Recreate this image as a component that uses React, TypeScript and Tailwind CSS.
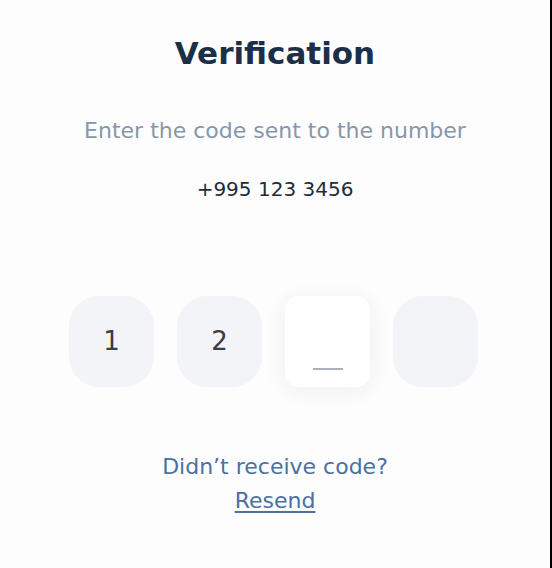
const digits = ['1', '2', '', ''];

function CodeBox({ value, active }: { value: string; active?: boolean }) {
  if (active) {
    return (
      <div className="flex h-[91px] w-[85px] items-end justify-center rounded-[14px] bg-white pb-[17px] shadow-[0_4px_22px_rgba(30,40,60,0.07)]">
        <div className="h-[2px] w-[30px] bg-[#a9b0bd]" />
      </div>
    );
  }
  return (
    <div className="flex h-[91px] w-[85px] items-center justify-center rounded-[30px] bg-[#f3f4f7] text-[26px] text-[#3a3d43]">
      {value}
    </div>
  );
}

export default function App() {
  return (
    <div className="flex h-[568px] w-[552px] bg-black font-['DejaVu_Sans',sans-serif]">
      <div className="flex h-full w-[550px] flex-col items-center bg-[#fdfdfd]">
        <h1 className="mt-[32px] text-[31px] font-bold leading-[42px] text-[#1b2f48]">Verification</h1>
        <p className="mt-[43px] text-[22px] leading-[28px] text-[#8797ab]">Enter the code sent to the number</p>
        <p className="mt-[30px] text-[20px] leading-[28px] text-[#1f2b3a]">+995 123 3456</p>
        <div className="mr-[3px] mt-[93px] flex gap-[23px]">
          {digits.map((d, i) => (
            <CodeBox key={i} value={d} active={i === 2} />
          ))}
        </div>
        <p className="mt-[66px] text-[22px] leading-[28px] text-[#4a71a0]">Didn’t receive code?</p>
        <button className="mt-[6px] text-[22px] leading-[28px] text-[#4a71a0] underline underline-offset-[3px]">Resend</button>
      </div>
    </div>
  );
}
